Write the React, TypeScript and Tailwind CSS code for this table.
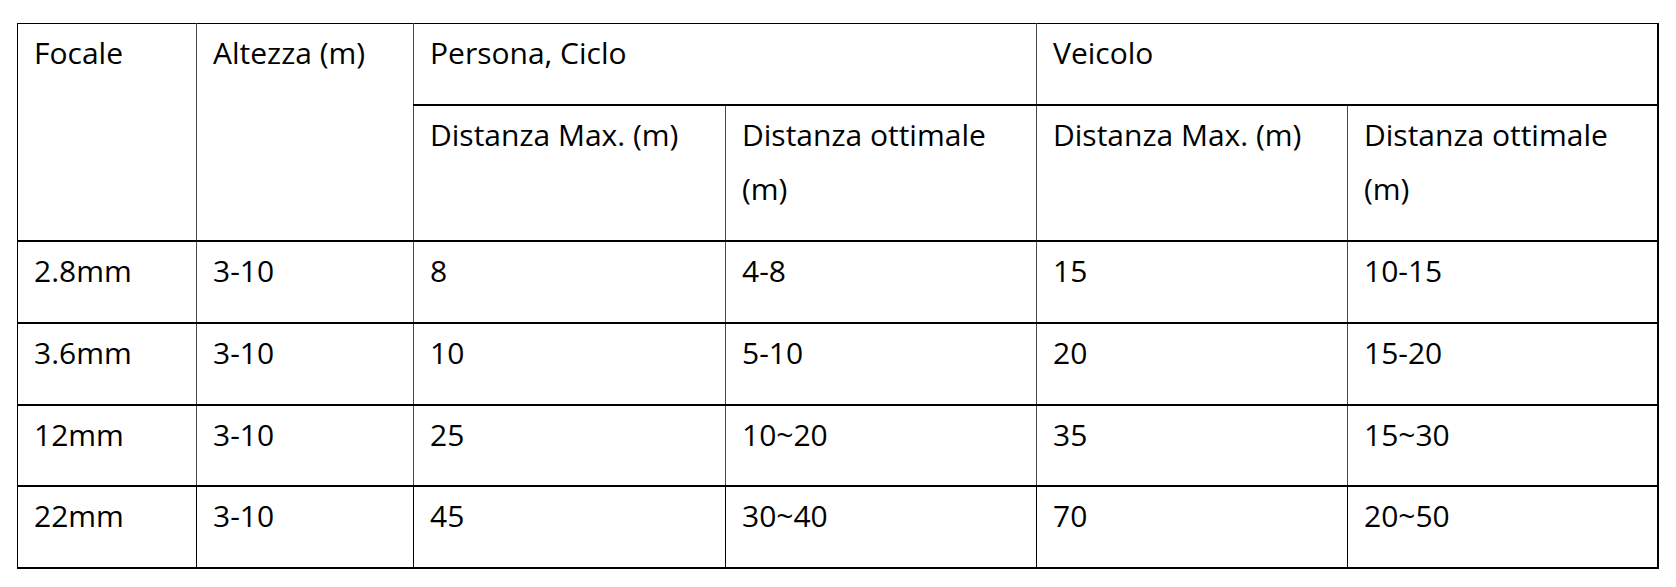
import React from "react";

const V = "border-r border-r-[#4a4a4a]";
const VL = "border-r border-r-black";

export default function App() {
  const data = [
    ["2.8mm", "3-10", "8", "4-8", "15", "10-15"],
    ["3.6mm", "3-10", "10", "5-10", "20", "15-20"],
    ["12mm", "3-10", "25", "10~20", "35", "15~30"],
    ["22mm", "3-10", "45", "30~40", "70", "20~50"],
  ];
  const heights = ["h-[82px]", "h-[82px]", "h-[81px]", "h-[82px]"];
  const td = "align-top px-[16px] pt-[2px] pb-0 border-b-2 border-b-black";
  return (
    <div className="w-[1676px] h-[587px] bg-white pt-[23px] pl-[17px] font-['Open_Sans',sans-serif] text-black">
      <table className="table-fixed border-collapse w-[1640px] text-[30px] leading-[54.5px]">
        <colgroup>
          <col className="w-[179px]" />
          <col className="w-[217px]" />
          <col className="w-[312px]" />
          <col className="w-[311px]" />
          <col className="w-[311px]" />
          <col className="w-[310px]" />
        </colgroup>
        <tbody>
          <tr className="h-[81px]">
            <td rowSpan={2} className={`${td} border-t border-t-black border-l border-l-black ${V}`}>Focale</td>
            <td rowSpan={2} className={`${td} border-t border-t-black ${V}`}>Altezza (m)</td>
            <td colSpan={2} className={`${td} border-t border-t-black ${V}`}>Persona, Ciclo</td>
            <td colSpan={2} className={`${td} border-t border-t-black border-r-2 border-r-black`}>Veicolo</td>
          </tr>
          <tr className="h-[136px]">
            <td className={`${td} ${V}`}>Distanza Max. (m)</td>
            <td className={`${td} ${V}`}>Distanza ottimale (m)</td>
            <td className={`${td} ${V}`}>Distanza Max. (m)</td>
            <td className={`${td} border-r-2 border-r-black`}>Distanza ottimale (m)</td>
          </tr>
          {data.map((row, i) => (
            <tr key={i} className={heights[i]}>
              {row.map((c, j) => (
                <td
                  key={j}
                  className={`${td} ${j === 0 ? "border-l border-l-black" : ""} ${
                    j === 5 ? "border-r-2 border-r-black" : i === 3 ? VL : V
                  }`}
                >
                  {c}
                </td>
              ))}
            </tr>
          ))}
        </tbody>
      </table>
    </div>
  );
}
